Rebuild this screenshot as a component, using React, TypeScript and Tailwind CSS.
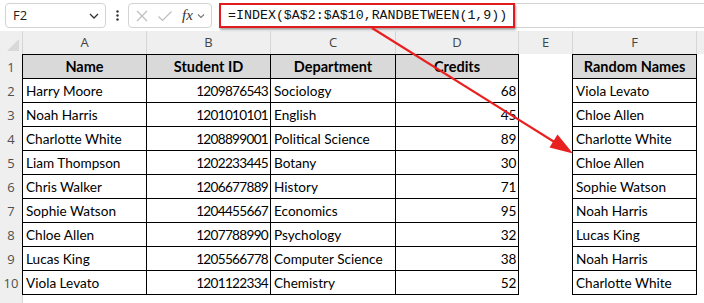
import React from "react";

const rows: [string, string, string, string, string][] = [
  ["Harry Moore", "1209876543", "Sociology", "68", "Viola Levato"],
  ["Noah Harris", "1201010101", "English", "45", "Chloe Allen"],
  ["Charlotte White", "1208899001", "Political Science", "89", "Charlotte White"],
  ["Liam Thompson", "1202233445", "Botany", "30", "Chloe Allen"],
  ["Chris Walker", "1206677889", "History", "71", "Sophie Watson"],
  ["Sophie Watson", "1204455667", "Economics", "95", "Noah Harris"],
  ["Chloe Allen", "1207788990", "Psychology", "32", "Lucas King"],
  ["Lucas King", "1205566778", "Computer Science", "38", "Noah Harris"],
  ["Viola Levato", "1201122334", "Chemistry", "52", "Charlotte White"],
];

const cellFont = { fontFamily: "Lato, 'Open Sans', sans-serif" };

function RowHead({ n }: { n: number | string }) {
  return (
    <div className="w-[22px] shrink-0 bg-[#efefef] flex items-center justify-center pt-[2px] text-[13px] text-[#505050] font-['Open_Sans',sans-serif]">
      {n}
    </div>
  );
}

export default function App() {
  return (
    <div className="relative w-[704px] h-[303px] overflow-hidden bg-white select-none">
      {/* Toolbar */}
      <div className="h-[31px] flex items-start pt-[3px] pl-[5px] gap-0 bg-white">
        <div className="w-[101px] h-[25px] rounded-[4px] border border-[#d3d3d3] flex items-center justify-between pl-[7px] pr-[6px] text-[13px] text-[#222] font-['Open_Sans',sans-serif]">
          <span>F2</span>
          <svg width="10" height="6" viewBox="0 0 10 6"><path d="M1 1l4 4 4-4" fill="none" stroke="#333" strokeWidth="1.3" /></svg>
        </div>
        <div className="w-[22px] h-[25px] flex items-center justify-center">
          <svg width="3" height="11" viewBox="0 0 3 11"><circle cx="1.5" cy="1.5" r="1.2" fill="#333" /><circle cx="1.5" cy="5.5" r="1.2" fill="#333" /><circle cx="1.5" cy="9.5" r="1.2" fill="#333" /></svg>
        </div>
        <div className="w-[84px] h-[25px] rounded-[4px] border border-[#d3d3d3] flex items-center pl-[5px] pr-[3px]">
          <svg width="14" height="14" viewBox="0 0 14 14" className="ml-[1px]"><path d="M2 2l10 10M12 2L2 12" stroke="#bdbdbd" strokeWidth="1.2" /></svg>
          <svg width="16" height="14" viewBox="0 0 16 14" className="ml-[8px]"><path d="M1.5 7.5l4 4L14.5 2.5" fill="none" stroke="#bdbdbd" strokeWidth="1.2" /></svg>
          <span className="ml-[9px] text-[15px] italic text-[#333] font-['Liberation_Serif',serif] leading-none">fx</span>
          <svg width="8" height="6" viewBox="0 0 8 6" className="ml-[4px]"><path d="M1 1.5l3 3 3-3" fill="none" stroke="#777" strokeWidth="1.1" /></svg>
        </div>
        <div className="ml-[7px] flex-1 h-[25px] border-y border-[#d3d3d3] flex items-stretch">
          <div className="w-[296px] -mt-[1px] -mb-[1px] border-2 border-[#e11b1b] shadow-[1px_2px_2px_rgba(0,0,0,0.35)] flex items-center pl-[7px] pt-[1px] text-[13.3px] text-[#111] font-['Liberation_Mono',monospace] whitespace-nowrap">
            =INDEX($A$2:$A$10,RANDBETWEEN(1,9))
          </div>
        </div>
      </div>

      {/* Column headers */}
      <div className="h-[23px] flex bg-[#efefef] text-[13px] text-[#444] font-['Open_Sans',sans-serif]">
        <div className="w-[23px] shrink-0 relative border-r border-[#d6d6d6]">
          <svg width="14" height="14" viewBox="0 0 14 14" className="absolute right-[2px] bottom-[2px]"><path d="M13 1L13 13L1 13Z" fill="#d9d9d9" /></svg>
        </div>
        {[
          ["A", 124],
          ["B", 124],
          ["C", 125],
          ["D", 123],
          ["E", 54],
          ["F", 124],
        ].map(([l, w]) => (
          <div key={l as string} style={{ width: w as number }} className="shrink-0 border-r border-[#d6d6d6] flex items-center justify-center">
            {l}
          </div>
        ))}
      </div>

      {/* Header row 1 */}
      <div className="h-[25px] flex" style={cellFont}>
        <RowHead n={1} />
        <div className="w-[125px] shrink-0 border border-black bg-[#d9d9d9] flex items-center justify-center pt-[1px] font-bold text-[14.5px] text-black">Name</div>
        <div className="w-[124px] shrink-0 border-y border-r border-black bg-[#d9d9d9] flex items-center justify-center pt-[1px] font-bold text-[14.5px] text-black">Student ID</div>
        <div className="w-[125px] shrink-0 border-y border-r border-black bg-[#d9d9d9] flex items-center justify-center pt-[1px] font-bold text-[14.5px] text-black">Department</div>
        <div className="w-[123px] shrink-0 border-y border-r border-black bg-[#d9d9d9] flex items-center justify-center pt-[1px] font-bold text-[14.5px] text-black">Credits</div>
        <div className="w-[53px] shrink-0" />
        <div className="w-[125px] shrink-0 border border-black bg-[#d9d9d9] flex items-center justify-center pt-[1px] font-bold text-[14.5px] text-black">Random Names</div>
      </div>

      {rows.map((r, i) => (
        <div key={i} className="h-[24px] flex text-[13.6px] text-black" style={cellFont}>
          <RowHead n={i + 2} />
          <div className="w-[125px] shrink-0 border-x border-b border-black flex items-center pl-[3px] pt-[2px] whitespace-nowrap">{r[0]}</div>
          <div className="w-[124px] shrink-0 border-r border-b border-black flex items-center justify-end pr-[2px] pt-[2px] tracking-[-0.7px]">{r[1]}</div>
          <div className="w-[125px] shrink-0 border-r border-b border-black flex items-center pl-[3px] pt-[2px] whitespace-nowrap">{r[2]}</div>
          <div className="w-[123px] shrink-0 border-r border-b border-black flex items-center justify-end pr-[2px] pt-[2px] tracking-[-0.3px]">{r[3]}</div>
          <div className="w-[53px] shrink-0" />
          <div className="w-[125px] shrink-0 border-x border-b border-black flex items-center pl-[3px] pt-[2px] whitespace-nowrap">{r[4]}</div>
        </div>
      ))}

      <div className="h-[24px] flex">
        <div className="w-[23px] shrink-0 bg-[#efefef] border-r border-[#d6d6d6]" />
      </div>

      {/* Annotation arrow */}
      <svg className="absolute left-0 top-0 pointer-events-none" width="704" height="303" viewBox="0 0 704 303">
        <line x1="372" y1="28" x2="556" y2="143" stroke="#e8201f" strokeWidth="2.2" />
        <path d="M573 153.5 L549.5 147.5 L557.5 134.5 Z" fill="#e8201f" />
      </svg>
    </div>
  );
}
